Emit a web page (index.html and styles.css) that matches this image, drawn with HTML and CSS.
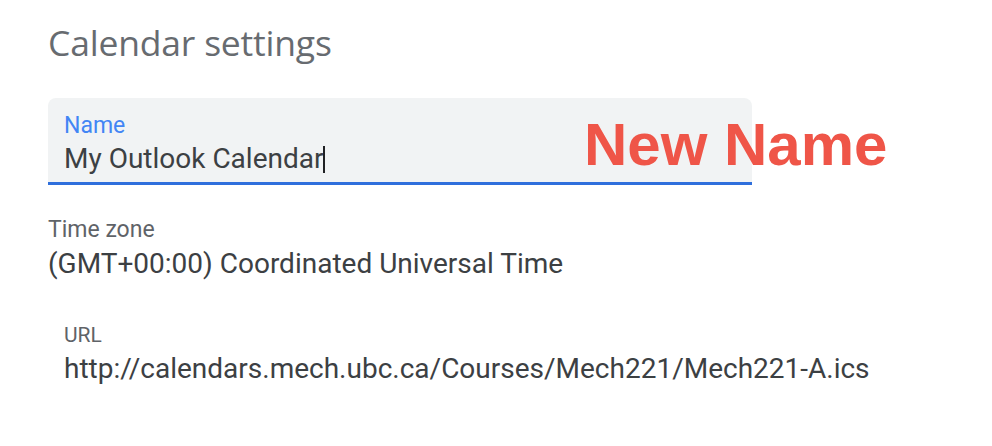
FILE: index.html
```html
<!DOCTYPE html>
<html>
<head>
<meta charset="utf-8">
<link rel="stylesheet" href="styles.css">
</head>
<body>
<main class="page">
  <h1 class="title">Calendar settings</h1>
  <div class="field-row">
    <div class="name-field">
      <div class="name-label">Name</div>
      <div class="name-value">My Outlook Calendar<span class="caret"></span></div>
    </div>
    <div class="annotation">New Name</div>
  </div>
  <section class="tz">
    <div class="label">Time zone</div>
    <div class="value">(GMT+00:00) Coordinated Universal Time</div>
  </section>
  <section class="url">
    <div class="label url-label">URL</div>
    <div class="value">http://calendars.mech.ubc.ca/Courses/Mech221/Mech221-A.ics</div>
  </section>
</main>
</body>
</html>
```

FILE: styles.css
```css
html, body {
  margin: 0;
  padding: 0;
  background: #ffffff;
}
body {
  font-family: Roboto, "Liberation Sans", Arial, sans-serif;
  width: 992px;
  height: 446px;
  overflow: hidden;
}
.page {
  padding: 20px 0 0 48px;
}
.title {
  margin: 0;
  font-family: "Open Sans", Roboto, sans-serif;
  font-weight: 400;
  font-size: 35.5px;
  line-height: 44px;
  color: #676b70;
  letter-spacing: -0.2px;
}
.field-row {
  position: relative;
  margin-top: 34px;
}
.name-field {
  width: 704px;
  height: 87px;
  box-sizing: border-box;
  background: #f1f3f4;
  border-radius: 8px 8px 0 0;
  border-bottom: 3px solid #2f6fdc;
  padding: 15px 16px 0 16px;
}
.name-label {
  font-size: 23px;
  line-height: 26px;
  color: #4285f4;
}
.name-value {
  margin-top: 3px;
  font-size: 28px;
  line-height: 34px;
  color: #3c4043;
  display: flex;
  align-items: center;
}
.caret {
  display: inline-block;
  width: 2px;
  height: 27px;
  background: #202124;
}
.annotation {
  position: absolute;
  left: 536px;
  top: 12px;
  font-family: "Liberation Sans", Arial, sans-serif;
  font-weight: 700;
  font-size: 60px;
  line-height: 70px;
  color: #ef5548;
}
.tz {
  margin-top: 32px;
}
.label {
  font-size: 23px;
  line-height: 26px;
  color: #5f6368;
}
.value {
  margin-top: 4px;
  font-size: 28px;
  line-height: 34px;
  color: #3c4043;
}
.url {
  margin-top: 41px;
  padding-left: 16px;
}
.url-label {
  font-size: 21px;
}
```
